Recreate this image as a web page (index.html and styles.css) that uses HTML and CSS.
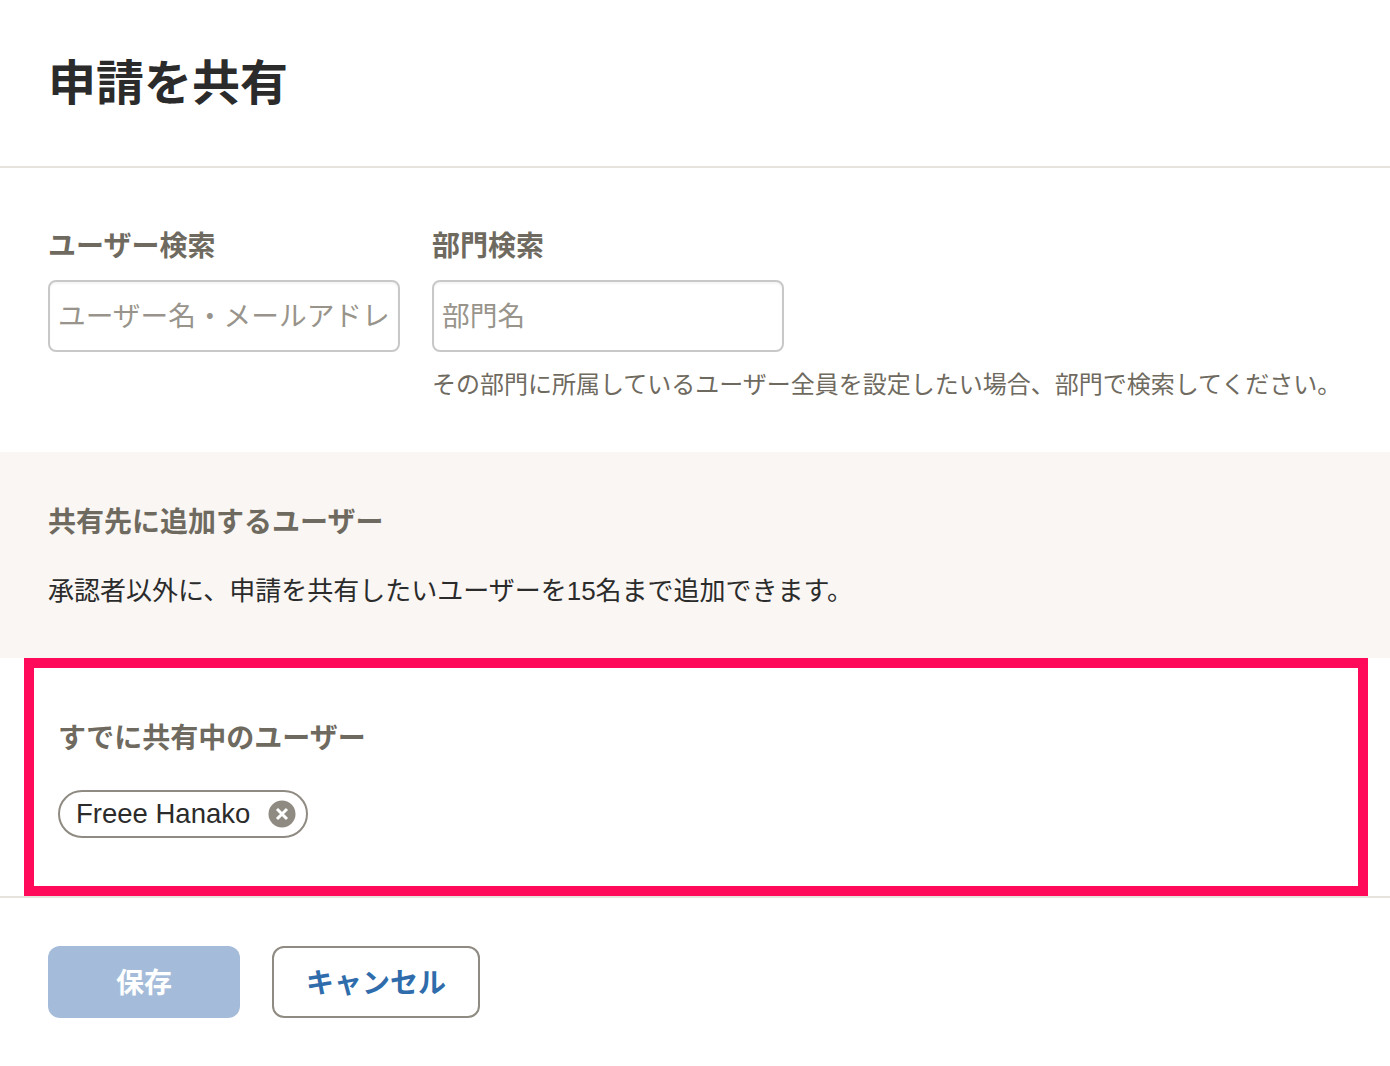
FILE: index.html
```html
<!DOCTYPE html>
<html lang="ja">
<head>
<meta charset="utf-8">
<title>申請を共有</title>
<link rel="stylesheet" href="styles.css">
</head>
<body>
<header class="header"><h1 class="title">申請を共有</h1></header>
<section class="search">
  <div class="field">
    <label class="label" for="user">ユーザー検索</label>
    <input class="input" id="user" type="text" placeholder="ユーザー名・メールアドレス">
  </div>
  <div class="field">
    <label class="label" for="dept">部門検索</label>
    <input class="input" id="dept" type="text" placeholder="部門名">
    <p class="help">その部門に所属しているユーザー全員を設定したい場合、部門で検索してください。</p>
  </div>
</section>
<section class="add">
  <h2 class="label">共有先に追加するユーザー</h2>
  <p class="desc">承認者以外に、申請を共有したいユーザーを15名まで追加できます。</p>
</section>
<section class="shared">
  <h2 class="label">すでに共有中のユーザー</h2>
  <div class="chip">
    <span class="chip-name">Freee Hanako</span>
    <svg class="chip-x" viewBox="0 0 28 28" width="28" height="28" aria-hidden="true"><circle cx="14" cy="14" r="13.5" fill="#8f8b82"/><path d="M9 9l10 10M19 9L9 19" stroke="#fff" stroke-width="3" fill="none"/></svg>
  </div>
</section>
<footer class="footer">
  <button class="btn btn-primary">保存</button>
  <button class="btn btn-secondary">キャンセル</button>
</footer>
</body>
</html>
```
FILE: styles.css
```css
* { box-sizing: border-box; }
html, body { margin: 0; padding: 0; }
body {
  width: 1390px;
  height: 1066px;
  overflow: hidden;
  background: #fff;
  color: #2b2b2b;
  font-family: "Liberation Sans", "Noto Sans CJK JP", sans-serif;
}
.header {
  height: 168px;
  border-bottom: 2px solid #e5e3dc;
  padding: 50px 48px 0;
}
.title {
  margin: 0;
  font-size: 48px;
  line-height: 68px;
  font-weight: 700;
  color: #2b2b2b;
}
.search {
  height: 284px;
  padding: 61px 48px 0;
  display: flex;
  gap: 32px;
}
.label {
  display: block;
  margin: 0;
  font-size: 28px;
  line-height: 36px;
  font-weight: 700;
  color: #6f6a60;
}
.field .label { margin-bottom: 15px; }
.input {
  display: block;
  width: 352px;
  height: 72px;
  border: 2px solid #c8c8c8;
  border-radius: 8px;
  background: #fff;
  box-shadow: inset 0 2px 2px rgba(0, 0, 0, 0.04);
  padding: 2px 8px 0;
  margin: 0;
  font-family: inherit;
  font-size: 27.7px;
  outline: none;
}
.input::placeholder {
  color: #98948b;
  opacity: 1;
}
.help {
  margin: 16px 0 0;
  font-size: 24px;
  line-height: 34px;
  color: #6f6a60;
  white-space: nowrap;
}
.add {
  height: 206px;
  background: #f9f6f3;
  padding: 53px 48px 0;
}
.desc {
  margin: 32px 0 0;
  font-size: 26px;
  line-height: 36px;
  color: #2b2b2b;
}
.shared {
  margin: 0 22px 0 24px;
  height: 238px;
  border: 10px solid #ff0a5a;
  padding: 53px 24px 0 24px;
}
.chip {
  margin-top: 33px;
  width: 250px;
  height: 48px;
  border: 2px solid #8f8b82;
  border-radius: 24px;
  padding: 0 10px 0 16px;
  display: flex;
  align-items: center;
  justify-content: space-between;
}
.chip-name {
  font-size: 27.5px;
  color: #2b2b2b;
}
.footer {
  border-top: 2px solid #e5e3dc;
  padding: 48px 48px 0;
  display: flex;
  gap: 32px;
}
.btn {
  height: 72px;
  border-radius: 12px;
  font-family: inherit;
  font-size: 28px;
  font-weight: 700;
  padding: 0 0 2px;
}
.btn-primary {
  width: 192px;
  border: 0;
  background: #a4bcd9;
  color: #fff;
}
.btn-secondary {
  width: 208px;
  border: 2px solid #8f8b82;
  background: #fff;
  color: #2f6cab;
}
```
